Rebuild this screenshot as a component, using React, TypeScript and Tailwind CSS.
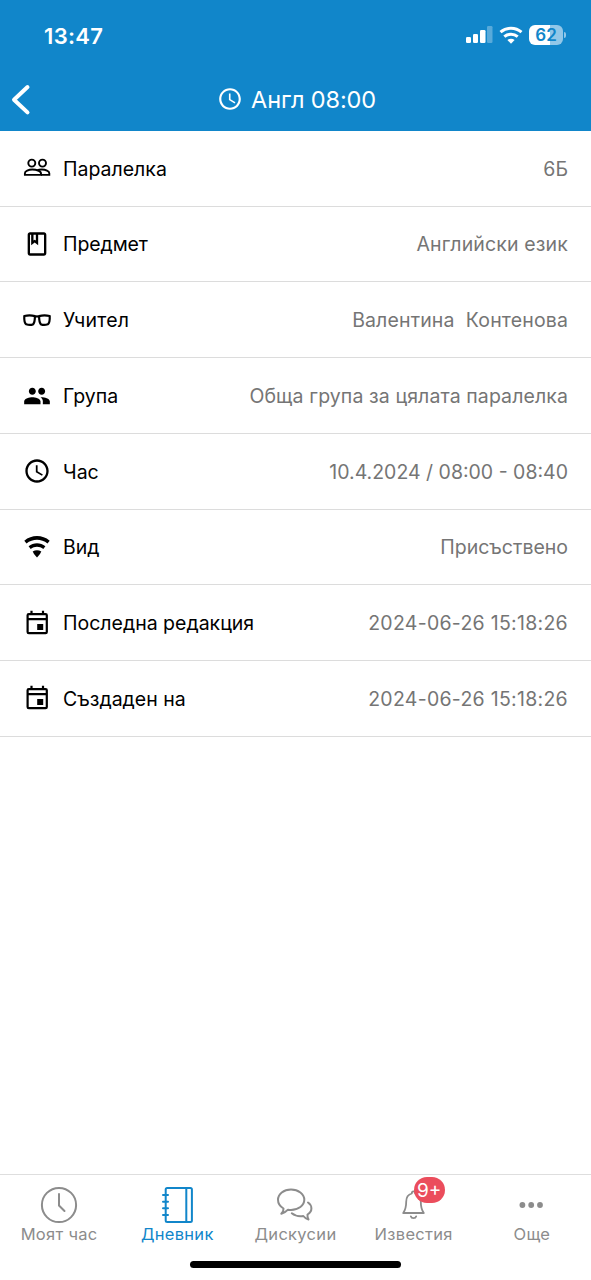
import type { ReactNode } from "react";
import { MdAccessTime, MdOutlineBook, MdPeople } from "react-icons/md";

const PeopleIcon = () => (
  <svg width="30" height="30" viewBox="0 0 30 30" fill="none" stroke="currentColor" strokeWidth="1.9">
    <circle cx="9.8" cy="10.1" r="3.5" />
    <circle cx="20.5" cy="10.1" r="3.5" />
    <path d="M2.9 21.9v-1.7c0-2.2 3.7-3.7 7.4-3.7 4.3 0 8.7 1.5 8.7 3.9v1.5z" />
    <path d="M14.6 17.5c1.6-.7 3.5-1 5.3-1 3.7 0 7.4 1.5 7.4 3.7v1.7H19" />
  </svg>
);

const GlassesIcon = () => (
  <svg width="30" height="30" viewBox="0 0 30 30" fill="none" stroke="currentColor" strokeWidth="2.2" strokeLinejoin="round">
    <path d="M2.3 11c3.4-.8 7.3-.8 10.6.1 0 3.900-.7 7-1.700 8.100-1.800.9-4.700.9-7 .1C2.600 18.300 2.100 14.800 2.300 11z" />
    <path d="M27.700 11c-3.400-.8-7.300-.8-10.600.1 0 3.900.7 7 1.700 8.100 1.800.9 4.700.9 7 .1 1.600-1 2.100-4.500 1.900-8.300z" />
    <path d="M12.500 11.800c1.500-.6 3.500-.6 5 0" />
  </svg>
);

const WifiIcon = () => (
  <svg width="30" height="30" viewBox="0 0 30 30" fill="currentColor">
    <path d="M2.300 8.700C9.700 2.500 20.300 2.500 27.700 8.700l-2.200 2.900c-6.200-5-14.800-5-21 0z" />
    <path d="M6.600 14.200c4.900-3.900 11.900-3.900 16.800 0l-2.100 2.800c-3.800-2.900-8.800-2.900-12.600 0z" />
    <path d="M10.700 19.500c2.700-1.800 5.900-1.800 8.600 0L18 22l-3 3.500-3-3.500z" />
  </svg>
);

const CalendarIcon = () => (
  <svg width="30" height="30" viewBox="0 0 30 30" fill="none" stroke="currentColor" strokeWidth="2.200">
    <rect x="5.600" y="6.100" width="19.200" height="19" rx="1.200" />
    <path d="M5.600 11.200h19.200M9.500 6V2.800M21 6V2.800" />
    <rect x="15.200" y="16" width="6" height="6" fill="currentColor" stroke="none" />
  </svg>
);

type Row = {
  icon: ReactNode;
  label: string;
  value: string;
  labelClass?: string;
  valueClass?: string;
};

const rows: Row[] = [
  { icon: <PeopleIcon />, label: "Паралелка", value: "6Б" },
  {
    icon: <MdOutlineBook size={28} />,
    label: "Предмет",
    value: "Английски език",
    labelClass: "tracking-[-0.1px]",
    valueClass: "tracking-[0.14px]",
  },
  {
    icon: <GlassesIcon />,
    label: "Учител",
    value: "Валентина  Контенова",
    labelClass: "tracking-[0.2px]",
    valueClass: "tracking-[0.14px]",
  },
  {
    icon: <MdPeople size={28} />,
    label: "Група",
    value: "Обща група за цялата паралелка",
    valueClass: "tracking-[0.1px]",
  },
  { icon: <MdAccessTime size={28} />, label: "Час", value: "10.4.2024 / 08:00 - 08:40" },
  { icon: <WifiIcon />, label: "Вид", value: "Присъствено" },
  {
    icon: <CalendarIcon />,
    label: "Последна редакция",
    value: "2024-06-26 15:18:26",
    valueClass: "tracking-[0.28px]",
  },
  {
    icon: <CalendarIcon />,
    label: "Създаден на",
    value: "2024-06-26 15:18:26",
    valueClass: "tracking-[0.28px]",
  },
];

const StatusBar = () => (
  <div className="flex h-[70px] items-center justify-between pl-[44px] pr-[25px]">
    <span className="pt-px text-[22px] font-semibold leading-none tracking-[0.35px]">13:47</span>
    <div className="flex items-center">
      <svg width="27" height="18" viewBox="0 0 27 18" fill="currentColor">
        <rect x="0" y="11" width="5" height="6" rx="1.300" />
        <rect x="7" y="8" width="5" height="9" rx="1.300" />
        <rect x="14" y="4" width="5.500" height="13" rx="1.300" />
        <rect x="21" y="0" width="5.500" height="17" rx="1.300" opacity=".3" />
      </svg>
      <svg className="ml-[6px]" width="24" height="18" viewBox="0 0 24 18" fill="none" stroke="currentColor" strokeWidth="3">
        <path d="M1.500 6.200c6-5.300 15-5.300 21 0" />
        <path d="M5.300 10.700c3.900-3.300 9.500-3.300 13.400 0" />
        <path d="M12 17.700l-3.600-3.700c2-1.700 5.200-1.700 7.200 0z" fill="currentColor" stroke="none" />
      </svg>
      <div className="ml-[6px] flex h-[20px] w-[34px] items-center justify-center rounded-[6px] bg-linear-to-r from-white from-62% to-[#92c7e8] to-62% text-[17px] font-semibold leading-none text-[#1186ca]">
        62
      </div>
      <div className="ml-[1px] h-[6px] w-[2px] rounded-r-full bg-[#92c7e8]" />
    </div>
  </div>
);

type Tab = {
  label: string;
  icon: ReactNode;
  active?: boolean;
  badge?: string;
};

const tabs: Tab[] = [
  {
    label: "Моят час",
    icon: (
      <svg width="38" height="38" viewBox="0 0 38 38" fill="none" stroke="currentColor" strokeWidth="2" strokeLinecap="round">
        <circle cx="19" cy="19" r="17.100" />
        <path d="M19 8v11.500l5.500 5.500" />
      </svg>
    ),
  },
  {
    label: "Дневник",
    active: true,
    icon: (
      <svg width="38" height="38" viewBox="0 0 38 38" fill="none" stroke="currentColor" strokeWidth="2" strokeLinecap="round">
        <rect x="7.700" y="1.900" width="26.200" height="34.200" rx="1.500" />
        <path d="M28.300 2v34M5 9h5M5 15.700h5M5 22.300h5M5 29h5" />
      </svg>
    ),
  },
  {
    label: "Дискусии",
    icon: (
      <svg width="38" height="38" viewBox="0 0 38 38" fill="none" stroke="currentColor" strokeWidth="2" strokeLinejoin="round" strokeLinecap="round">
        <path d="M5.300 27.700c1.700-1.700 2.400-3.200 2.200-5.200C4.200 20.600 2 17.400 2 13.800 2 8 7.700 3.500 15 3.500S28.300 8 28.300 13.800 22.300 24 15 24c-1 0-2-.1-3-.3-1.700 1.900-3.700 3.200-6.700 4z" />
        <path d="M32 16.500c2.200 1.400 3.400 3.600 3.400 6.100 0 2.500-1.400 4.500-3.900 5.900-.2 1.500 0 2.800 1 5-2.200-.6-3.900-1.800-5.200-3.500-3.900.6-8.500-.3-11.500-2.700" />
      </svg>
    ),
  },
  {
    label: "Известия",
    badge: "9+",
    icon: (
      <svg width="38" height="38" viewBox="0 0 38 38" fill="none" stroke="currentColor" strokeWidth="1.800" strokeLinejoin="round" strokeLinecap="round">
        <path d="M18.500 5.300c-1.200 0-1.700 1-1.700 2.200-4 1-5.600 4.200-5.600 8.300 0 6-.7 8.200-3 11.200h20.600c-2.300-3-3-5.200-3-11.200 0-4.100-1.600-7.300-5.600-8.300 0-1.200-.5-2.200-1.700-2.200z" />
        <path d="M15.800 30.300c.7 2.500 4.700 2.500 5.400 0" />
      </svg>
    ),
  },
  {
    label: "Още",
    icon: (
      <svg width="38" height="38" viewBox="0 0 38 38" fill="currentColor">
        <circle cx="9.400" cy="19" r="2.900" />
        <circle cx="18.200" cy="19" r="2.900" />
        <circle cx="27" cy="19" r="2.900" />
      </svg>
    ),
  },
];

export default function App() {
  return (
    <div className="flex h-[1280px] w-[591px] flex-col bg-white font-['Inter',sans-serif] text-black">
      <header className="h-[131px] bg-[#1186ca] text-white">
        <StatusBar />
        <div className="grid h-[60px] grid-cols-[60px_1fr_60px] items-center">
          <svg className="ml-[11px]" width="20" height="32" viewBox="0 0 20 32" fill="none" stroke="currentColor" strokeWidth="4" strokeLinecap="round" strokeLinejoin="round">
            <path d="M16.500 3L3 15.700l13.500 12.700" />
          </svg>
          <h1 className="flex items-center justify-center gap-[8px] pl-[2px] text-[23.500px] leading-none tracking-[-0.15px]">
            <MdAccessTime size={26} className="mb-[3px]" />
            Англ 08:00
          </h1>
        </div>
      </header>

      <main className="flex-1">
        {rows.map((row) => (
          <div
            key={row.label}
            className="flex h-[75.720px] items-center border-b border-[#dcdcdc] pl-[22px] pr-[23px] text-[19.500px]"
          >
            <div className="flex w-[30px] shrink-0 justify-center">{row.icon}</div>
            <span className={`ml-[11px] whitespace-nowrap pt-[2px] ${row.labelClass ?? ""}`}>{row.label}</span>
            <span className={`ml-auto whitespace-pre pt-[2px] text-[#757575] ${row.valueClass ?? ""}`}>
              {row.value}
            </span>
          </div>
        ))}
      </main>

      <nav className="h-[106px] border-t border-[#dedede]">
        <div className="grid grid-cols-5 pt-[11px]">
          {tabs.map((tab) => (
            <div
              key={tab.label}
              className={`flex flex-col items-center ${tab.active ? "text-[#1186ca]" : "text-[#8c8c8c]"}`}
            >
              <div className="relative">
                {tab.icon}
                {tab.badge && (
                  <span className="absolute -top-[9px] left-[19px] flex h-[26px] w-[31px] items-center justify-center rounded-full bg-[#eb4d5c] text-[19px] leading-none text-white">
                    {tab.badge}
                  </span>
                )}
              </div>
              <span className="text-[16.500px] leading-[20px] tracking-[0.3px]">{tab.label}</span>
            </div>
          ))}
        </div>
        <div className="mx-auto mt-[17px] h-[7px] w-[211px] rounded-full bg-black" />
      </nav>
    </div>
  );
}
